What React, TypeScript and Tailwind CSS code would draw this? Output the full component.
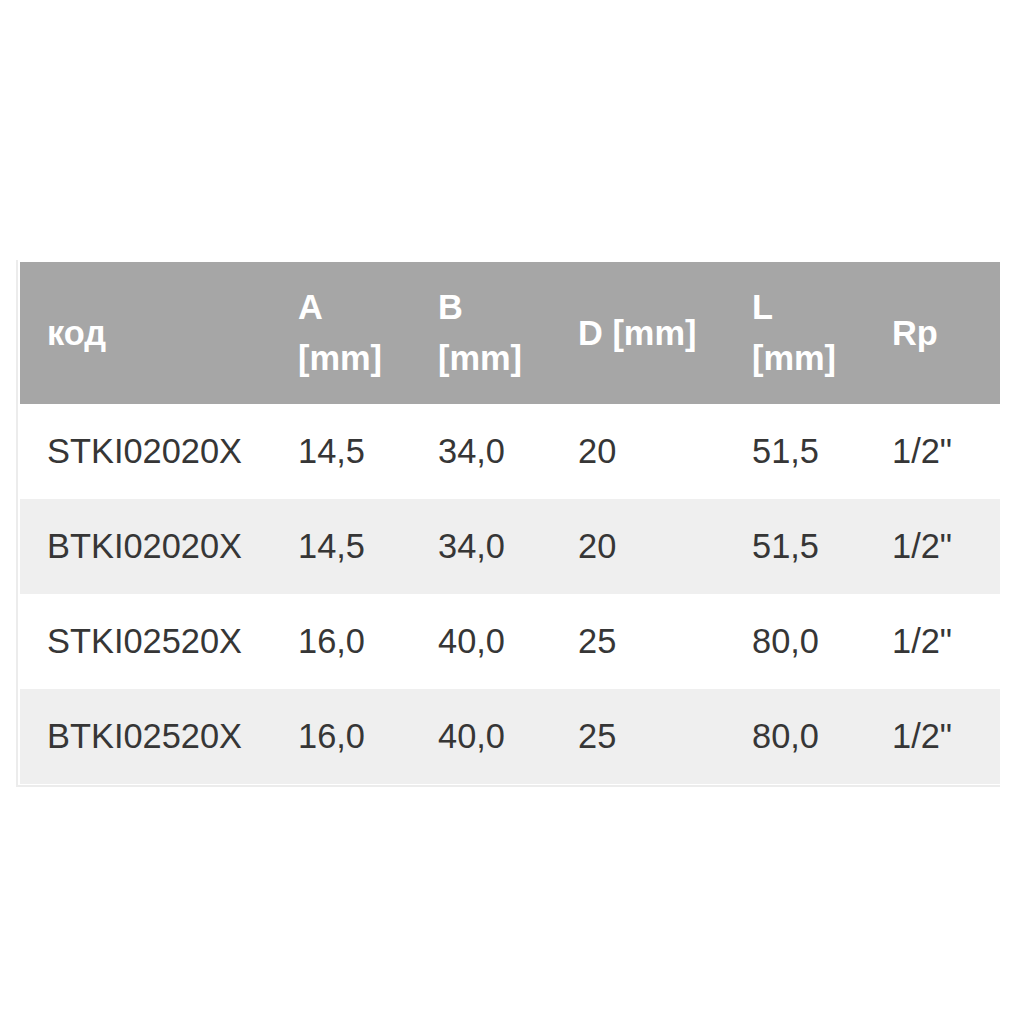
const head = ["код", "A [mm]", "B [mm]", "D [mm]", "L [mm]", "Rp"]

const rows = [
  ["STKI02020X", "14,5", "34,0", "20", "51,5", "1/2\""],
  ["BTKI02020X", "14,5", "34,0", "20", "51,5", "1/2\""],
  ["STKI02520X", "16,0", "40,0", "25", "80,0", "1/2\""],
  ["BTKI02520X", "16,0", "40,0", "25", "80,0", "1/2\""],
]

const widths = ["w-[251px]", "w-[140px]", "w-[140px]", "w-[174px]", "w-[140px]", "w-[135px]"]

export default function App() {
  return (
    <div className="w-[1020px] h-[1020px] bg-white pt-[260px] font-['Liberation_Sans',Arial,sans-serif]">
      <div className="ml-[16px] w-[984px] border-l-2 border-b-2 border-[#ececec] pl-[2px] pt-[2px] pb-[1px]">
        <table className="table-fixed border-collapse w-[980px] text-[34.4px] leading-[51px]">
          <colgroup>
            {widths.map((w, i) => (
              <col key={i} className={w} />
            ))}
          </colgroup>
          <thead>
            <tr className="bg-[#a6a6a6]">
              {head.map((h, i) => (
                <th
                  key={i}
                  className="px-[27px] py-[20px] h-[142px] text-left align-middle font-bold text-white"
                >
                  {h}
                </th>
              ))}
            </tr>
          </thead>
          <tbody>
            {rows.map((r, ri) => (
              <tr key={ri} className={ri % 2 === 1 ? "bg-[#efefef]" : "bg-white"}>
                {r.map((c, ci) => (
                  <td
                    key={ci}
                    className="px-[27px] py-[22px] h-[95px] text-left align-middle text-[#363636]"
                  >
                    {c}
                  </td>
                ))}
              </tr>
            ))}
          </tbody>
        </table>
      </div>
    </div>
  )
}
